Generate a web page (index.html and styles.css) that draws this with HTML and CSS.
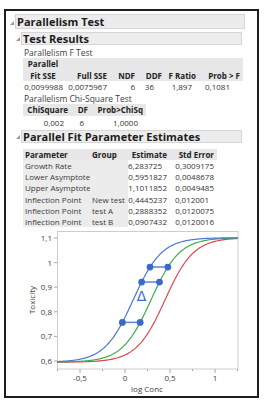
FILE: index.html
```html
<!DOCTYPE html>
<html lang="en">
<head>
  <meta charset="UTF-8">
  <title>Parallelism Test</title>
  <link rel="stylesheet" href="styles.css">
</head>
<body>
  <div class="frame">
    <div class="head lvl1">
      <div class="gutter"><span class="tri"></span></div>
      <div class="bar">Parallelism Test</div>
    </div>

    <div class="head lvl2">
      <div class="gutter"><span class="tri"></span></div>
      <div class="bar">Test Results</div>
    </div>

    <div class="caption">Parallelism F Test</div>
    <div class="tbl ftest">
      <div class="th center">Parallel<br>Fit SSE</div>
      <div class="th">Full SSE</div>
      <div class="th">NDF</div>
      <div class="th">DDF</div>
      <div class="th">F Ratio</div>
      <div class="th">Prob &gt; F</div>
      <div class="td">0,0099988</div>
      <div class="td">0,0075967</div>
      <div class="td">6</div>
      <div class="td pad8">36</div>
      <div class="td pad4">1,897</div>
      <div class="td pad10">0,1081</div>
    </div>

    <div class="caption">Parallelism Chi-Square Test</div>
    <div class="tbl chi">
      <div class="th">ChiSquare</div>
      <div class="th">DF</div>
      <div class="th">Prob&gt;ChiSq</div>
      <div class="td pad4">0,002</div>
      <div class="td pad4">6</div>
      <div class="td pad6">1,0000</div>
    </div>

    <div class="head lvl2 third">
      <div class="gutter"><span class="tri"></span></div>
      <div class="bar">Parallel Fit Parameter Estimates</div>
    </div>

    <div class="tbl params">
      <div class="th left">Parameter</div>
      <div class="th left">Group</div>
      <div class="th">Estimate</div>
      <div class="th">Std Error</div>

      <div class="lbl">Growth Rate</div><div class="lbl"></div>
      <div class="td pad6">6,283725</div><div class="td">0,3009175</div>

      <div class="lbl">Lower Asymptote</div><div class="lbl"></div>
      <div class="td">0,5951827</div><div class="td">0,0048678</div>

      <div class="lbl">Upper Asymptote</div><div class="lbl"></div>
      <div class="td">1,1011852</div><div class="td">0,0049485</div>

      <div class="lbl">Inflection Point</div><div class="lbl">New test</div>
      <div class="td">0,4445237</div><div class="td pad6">0,012001</div>

      <div class="lbl">Inflection Point</div><div class="lbl">test A</div>
      <div class="td">0,2888352</div><div class="td">0,0120075</div>

      <div class="lbl">Inflection Point</div><div class="lbl">test B</div>
      <div class="td">0,0907432</div><div class="td">0,0120016</div>
    </div>

    <svg class="chart" id="chart" width="250" height="166" viewBox="6 228 250 166">
      <defs>
        <clipPath id="plotClip"><rect x="57" y="231" width="181" height="138"/></clipPath>
      </defs>
      <rect class="plot" x="57.5" y="231.5" width="180.5" height="137.5"/>
      <g id="ticks"></g>
      <g clip-path="url(#plotClip)">
        <path id="curveNew" class="curve red"/>
        <path id="curveA" class="curve green"/>
        <path id="curveB" class="curve blue"/>
        <g id="marks"></g>
        <text class="delta" x="141.5" y="301">Δ</text>
      </g>
      <text class="axis-title" x="147" y="392" text-anchor="middle">log Conc</text>
      <text class="axis-title" x="0" y="0" text-anchor="middle" transform="translate(35 300) rotate(-90)">Toxicity</text>
    </svg>
  </div>

  <script>
    const lower = 0.5951827, upper = 1.1011852, rate = 6.283725;
    const ips = { curveNew: 0.4445237, curveA: 0.2888352, curveB: 0.0907432 };
    const ns = "http://www.w3.org/2000/svg";

    function px(u) { return 125 + 90 * u; }
    function py(v) { return 361 - 246 * (v - 0.6); }
    function fit(u, ip) { return lower + (upper - lower) / (1 + Math.exp(-rate * (u - ip))); }
    function inv(v, ip) { return ip + Math.log((v - lower) / (upper - v)) / rate; }

    function add(parent, tag, attrs, text) {
      const el = document.createElementNS(ns, tag);
      for (const k in attrs) el.setAttribute(k, attrs[k]);
      if (text) el.textContent = text;
      parent.appendChild(el);
      return el;
    }

    for (const id in ips) {
      let d = "";
      for (let u = -0.8; u <= 1.3; u += 0.01) {
        d += (d ? " L" : "M") + px(u).toFixed(2) + " " + py(fit(u, ips[id])).toFixed(2);
      }
      document.getElementById(id).setAttribute("d", d);
    }

    // axis ticks and labels
    const ticks = document.getElementById("ticks");
    [0.6, 0.7, 0.8, 0.9, 1, 1.1].forEach(v => {
      const y = py(v);
      add(ticks, "line", { x1: 54, x2: 57, y1: y, y2: y, class: "tick" });
      add(ticks, "text", { x: 52, y: y + 3, class: "tick-label", "text-anchor": "end" },
        String(v).replace(".", ","));
    });
    [-0.75, -0.5, -0.25, 0, 0.25, 0.5, 0.75, 1, 1.25].forEach(u => {
      const x = px(u);
      const major = Number.isInteger(u * 2);
      add(ticks, "line", { x1: x, x2: x, y1: 369, y2: major ? 373 : 371, class: "tick" });
      if (major) {
        add(ticks, "text", { x: x, y: 381, class: "tick-label", "text-anchor": "middle" },
          String(u).replace(".", ","));
      }
    });

    // paired points between test B and test A
    const marks = document.getElementById("marks");
    [0.757, 0.921, 0.982].forEach(v => {
      const y = py(v);
      const x1 = px(inv(v, ips.curveB)), x2 = px(inv(v, ips.curveA));
      add(marks, "line", { x1: x1, x2: x2, y1: y, y2: y, class: "link" });
      add(marks, "circle", { cx: x1, cy: y, r: 3.4, class: "dot" });
      add(marks, "circle", { cx: x2, cy: y, r: 3.4, class: "dot" });
    });
  </script>
</body>
</html>
```

FILE: styles.css
```css
* {
  box-sizing: border-box;
}

body {
  margin: 0;
  background: #ffffff;
  font-family: 'Open Sans', 'Noto Sans', sans-serif;
  color: #333;
}

.frame {
  margin: 9px 0 0 4px;
  width: 255px;
  height: 389px;
  border: 2px solid #1e1e1e;
  overflow: hidden;
}

/* outline headers */
.head {
  display: flex;
}

.gutter {
  display: flex;
  align-items: flex-end;
  justify-content: flex-end;
  padding: 0 1px 4px 0;
}

.tri {
  width: 0;
  height: 0;
  border-left: 4px solid transparent;
  border-bottom: 4px solid #9a9a9a;
}

.bar {
  display: flex;
  align-items: center;
  padding-left: 1px;
  background: #ececec;
  border: 1px solid #d6d6d6;
  font-weight: 700;
  font-size: 11px;
  color: #1c1c1c;
  white-space: nowrap;
}

.lvl1 {
  margin-top: 3px;
}

.lvl1 .gutter {
  width: 9px;
}

.lvl1 .bar {
  width: 230px;
  height: 15px;
}

.lvl2 {
  margin-top: 3px;
}

.lvl2 .gutter {
  width: 15px;
}

.lvl2 .bar {
  width: 221px;
  height: 13px;
}

.third {
  margin-top: 1px;
}

.caption {
  padding-left: 18px;
  font-size: 8.5px;
  line-height: 11px;
  height: 11px;
  color: #404040;
  white-space: nowrap;
}

.head + .caption {
  margin-top: 2px;
}

/* tables */
.tbl {
  display: grid;
  margin-left: 17px;
  font-size: 8px;
}

.th {
  display: flex;
  align-items: flex-end;
  justify-content: flex-end;
  padding-right: 3px;
  background: #e7e7e7;
  font-weight: 700;
  color: #222;
  line-height: 11.5px;
  white-space: nowrap;
}

.th.center {
  justify-content: center;
  text-align: center;
}

.th.left {
  justify-content: flex-start;
  padding-left: 2px;
}

.td {
  text-align: right;
  padding-right: 3px;
  line-height: 12px;
  white-space: nowrap;
}

.lbl {
  padding-left: 2px;
  background: #ececec;
  line-height: 11.2px;
  white-space: nowrap;
  color: #3a3a3a;
}

.pad4 { padding-right: 7px; }
.pad6 { padding-right: 8px; }
.pad8 { padding-right: 11px; }
.pad10 { padding-right: 13px; }

.ftest {
  grid-template-columns: 43px 44px 28px 27px 34px 44px;
}

.chi {
  grid-template-columns: 48px 20px 55px;
}

.chi .td {
  line-height: 13px;
}

.params {
  margin-top: 6px;
  grid-template-columns: 67px 38px 42px 47px;
}

.params .th {
  line-height: 11.4px;
}

.params .td {
  line-height: 11.2px;
}

/* chart */
.chart {
  display: block;
  margin-top: 1px;
}

.plot {
  fill: #ffffff;
  stroke: #cdcdcd;
  stroke-width: 1;
}

.tick {
  stroke: #a8a8a8;
  stroke-width: 1;
}

.tick-label,
.axis-title {
  font-family: 'Open Sans', 'Noto Sans', sans-serif;
  font-size: 8px;
  fill: #3c3c3c;
}

.curve {
  fill: none;
  stroke-width: 1.2;
}

.blue { stroke: #4c76dc; }
.green { stroke: #3dae4a; }
.red { stroke: #e0474f; }

.link {
  stroke: #5b84d8;
  stroke-width: 1.5;
}

.dot {
  fill: #3c69c8;
}

.delta {
  font-family: 'DejaVu Sans', sans-serif;
  font-size: 14px;
  fill: #3c69c8;
  text-anchor: middle;
}
```
